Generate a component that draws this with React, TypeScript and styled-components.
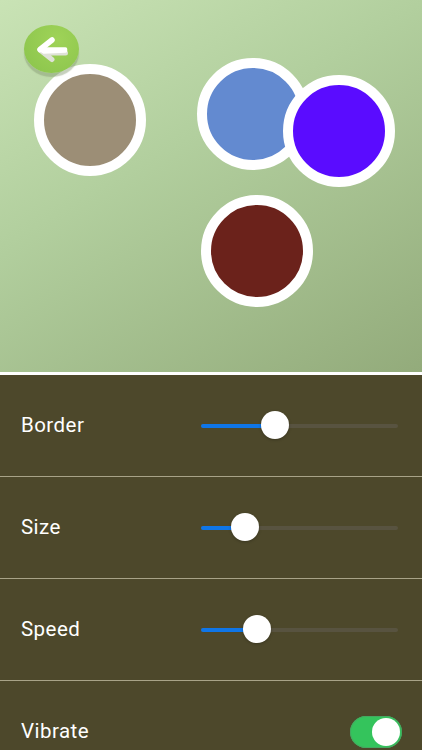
import React from "react";
import styled, { createGlobalStyle } from "styled-components";

const GlobalStyle = createGlobalStyle`
    html, body {
        margin: 0;
        padding: 0;
        width: 422px;
        height: 750px;
        overflow: hidden;
        background: #4d482b;
        font-family: Roboto, "Open Sans", sans-serif;
    }
`;

const Screen = styled.div`
    width: 422px;
    height: 750px;
    display: flex;
    flex-direction: column;
    overflow: hidden;
`;

const Playfield = styled.div`
    position: relative;
    flex: 0 0 372px;
    background: linear-gradient(150deg, #c9e3b5 0%, #b2cf9e 40%, #93ab7b 100%);
    border-bottom: 3px solid #ffffff;
`;

const BackButton = styled.button`
    position: absolute;
    left: 24px;
    top: 25px;
    width: 55px;
    height: 48px;
    padding: 0;
    border: 0;
    border-radius: 50%;
    background: radial-gradient(circle at 60% 30%, #9fd358 0%, #90c84f 70%, #8ac24b 100%);
    box-shadow: 0 4px 1px rgba(130, 150, 110, 0.45);
    display: flex;
    align-items: center;
    justify-content: center;
`;

const Ball = styled.div<{ $x: number; $y: number; $color: string }>`
    position: absolute;
    left: ${p => p.$x - 56}px;
    top: ${p => p.$y - 56}px;
    width: 92px;
    height: 92px;
    border: 10px solid #ffffff;
    border-radius: 50%;
    background: ${p => p.$color};
`;

const Panel = styled.div`
    flex: 1;
    background: #4d482b;
`;

const Row = styled.div`
    height: 101px;
    display: flex;
    align-items: center;
    justify-content: space-between;
    padding: 0 20px 0 21px;
    border-bottom: 1px solid #a8a388;
    &:last-child {
        border-bottom: 0;
    }
`;

const Label = styled.span`
    color: #ffffff;
    font-size: 20.5px;
    letter-spacing: 0.45px;
    margin-top: -1px;
`;

const Track = styled.div`
    position: relative;
    width: 197px;
    height: 4px;
    margin-right: 4px;
    border-radius: 2px;
    background: #585340;
`;

const TrackFill = styled.div`
    height: 100%;
    border-radius: 2px;
    background: #0f76e8;
`;

const Thumb = styled.div`
    position: absolute;
    top: -13px;
    width: 28px;
    height: 28px;
    margin-left: -14px;
    border-radius: 50%;
    background: #ffffff;
    box-shadow: 0 1px 3px rgba(0, 0, 0, 0.25);
`;

const Toggle = styled.div`
    width: 52px;
    height: 32px;
    box-sizing: border-box;
    padding: 2px;
    border-radius: 16px;
    background: #34c45c;
    box-shadow: inset 0 0 0 1px #45a860;
    display: flex;
    justify-content: flex-end;
`;

const ToggleKnob = styled.div`
    width: 28px;
    height: 28px;
    border-radius: 50%;
    background: #ffffff;
`;

function Slider({ value }: Readonly<{ value: number }>) {
    return (
        <Track>
            <TrackFill style={{ width: `${value}px` }} />
            <Thumb style={{ left: `${value}px` }} />
        </Track>
    );
}

const balls = [
    { x: 89.5, y: 120, color: "#9c8e76" },
    { x: 252.5, y: 114, color: "#638ad0" },
    { x: 339, y: 131, color: "#5a0cff" },
    { x: 257, y: 251, color: "#6b221b" },
];

export default function App() {
    return (
        <Screen>
            <GlobalStyle />
            <Playfield>
                {balls.map(b => <Ball key={b.color} $x={b.x} $y={b.y} $color={b.color} />)}
                <BackButton aria-label="Back">
                    <svg width="32" height="28" viewBox="0 0 32 28">
                        <path d="M4 15 L16 24.5 M11 18 L29.5 18" fill="none" stroke="#dfe2d8" strokeWidth="5" strokeLinecap="round" strokeLinejoin="round" />
                        <path d="M4 14.5 L16 5" fill="none" stroke="#ffffff" strokeWidth="5.5" strokeLinecap="round" />
                        <path d="M4 14.5 L11 14 L29.5 14 L29.5 16 L8 17 Z" fill="#ffffff" stroke="#ffffff" strokeWidth="3.5" strokeLinejoin="round" />
                    </svg>
                </BackButton>
            </Playfield>
            <Panel>
                <Row>
                    <Label>Border</Label>
                    <Slider value={74} />
                </Row>
                <Row>
                    <Label>Size</Label>
                    <Slider value={44} />
                </Row>
                <Row>
                    <Label>Speed</Label>
                    <Slider value={55.5} />
                </Row>
                <Row>
                    <Label>Vibrate</Label>
                    <Toggle><ToggleKnob /></Toggle>
                </Row>
            </Panel>
        </Screen>
    );
}
